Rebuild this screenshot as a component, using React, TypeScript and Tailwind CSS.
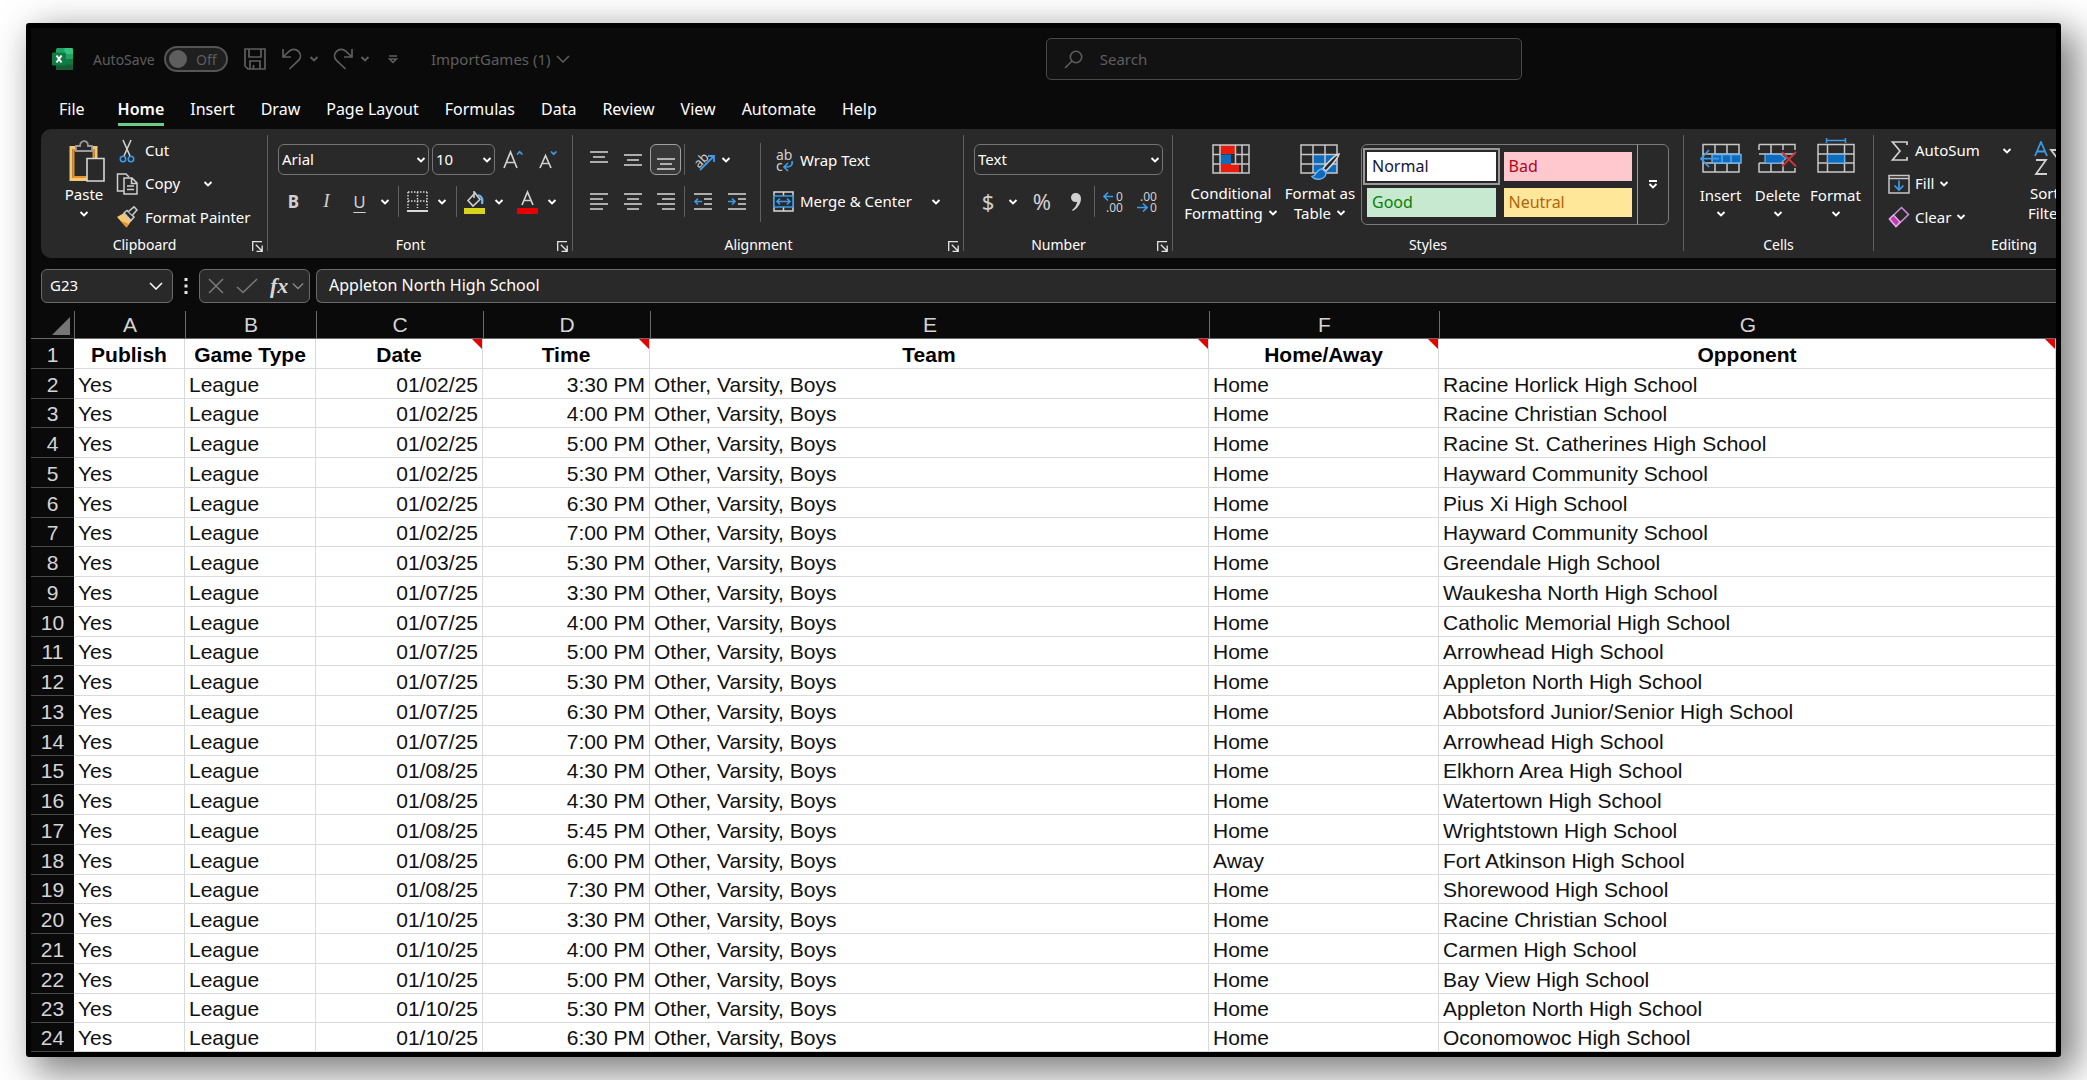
import React, { useState } from "react";

interface Game {
  date: string;
  time: string;
  place: string;
  opponent: string;
}

const games: Game[] = [
  { date: "01/02/25", time: "3:30 PM", place: "Home", opponent: "Racine Horlick High School" },
  { date: "01/02/25", time: "4:00 PM", place: "Home", opponent: "Racine Christian School" },
  { date: "01/02/25", time: "5:00 PM", place: "Home", opponent: "Racine St. Catherines High School" },
  { date: "01/02/25", time: "5:30 PM", place: "Home", opponent: "Hayward Community School" },
  { date: "01/02/25", time: "6:30 PM", place: "Home", opponent: "Pius Xi High School" },
  { date: "01/02/25", time: "7:00 PM", place: "Home", opponent: "Hayward Community School" },
  { date: "01/03/25", time: "5:30 PM", place: "Home", opponent: "Greendale High School" },
  { date: "01/07/25", time: "3:30 PM", place: "Home", opponent: "Waukesha North High School" },
  { date: "01/07/25", time: "4:00 PM", place: "Home", opponent: "Catholic Memorial High School" },
  { date: "01/07/25", time: "5:00 PM", place: "Home", opponent: "Arrowhead High School" },
  { date: "01/07/25", time: "5:30 PM", place: "Home", opponent: "Appleton North High School" },
  { date: "01/07/25", time: "6:30 PM", place: "Home", opponent: "Abbotsford Junior/Senior High School" },
  { date: "01/07/25", time: "7:00 PM", place: "Home", opponent: "Arrowhead High School" },
  { date: "01/08/25", time: "4:30 PM", place: "Home", opponent: "Elkhorn Area High School" },
  { date: "01/08/25", time: "4:30 PM", place: "Home", opponent: "Watertown High School" },
  { date: "01/08/25", time: "5:45 PM", place: "Home", opponent: "Wrightstown High School" },
  { date: "01/08/25", time: "6:00 PM", place: "Away", opponent: "Fort Atkinson High School" },
  { date: "01/08/25", time: "7:30 PM", place: "Home", opponent: "Shorewood High School" },
  { date: "01/10/25", time: "3:30 PM", place: "Home", opponent: "Racine Christian School" },
  { date: "01/10/25", time: "4:00 PM", place: "Home", opponent: "Carmen High School" },
  { date: "01/10/25", time: "5:00 PM", place: "Home", opponent: "Bay View High School" },
  { date: "01/10/25", time: "5:30 PM", place: "Home", opponent: "Appleton North High School" },
  { date: "01/10/25", time: "6:30 PM", place: "Home", opponent: "Oconomowoc High School" },
];

const tabs = ["File", "Home", "Insert", "Draw", "Page Layout", "Formulas", "Data", "Review", "View", "Automate", "Help"];

const columns = [
  { letter: "A", title: "Publish", width: "w-[111px]", note: false },
  { letter: "B", title: "Game Type", width: "w-[131px]", note: false },
  { letter: "C", title: "Date", width: "w-[167px]", note: true },
  { letter: "D", title: "Time", width: "w-[167px]", note: true },
  { letter: "E", title: "Team", width: "w-[559px]", note: true },
  { letter: "F", title: "Home/Away", width: "w-[230px]", note: true },
  { letter: "G", title: "Opponent", width: "", note: true },
];

function Chevron({ className = "" }: { className?: string }) {
  return (
    <svg width="10" height="6" viewBox="0 0 10 6" fill="none" className={`shrink-0 ${className}`}>
      <path d="M1.5 1l3.5 3.5L8.5 1" stroke="currentColor" strokeWidth="1.9" />
    </svg>
  );
}

function WideChevron({ className = "" }: { className?: string }) {
  return (
    <svg width="14" height="8" viewBox="0 0 14 8" fill="none" className={`shrink-0 ${className}`}>
      <path d="M1 1l6 6 6-6" stroke="currentColor" strokeWidth="1.5" />
    </svg>
  );
}

function Divider({ className = "" }: { className?: string }) {
  return <div className={`w-px shrink-0 bg-[#5f5f5f] ${className}`} />;
}

interface GroupProps {
  label: string;
  width: string;
  launcher?: boolean;
  children: React.ReactNode;
}

function Group({ label, width, launcher, children }: GroupProps) {
  return (
    <section className={`flex h-[129px] shrink-0 flex-col ${width}`}>
      <div className="flex h-[105px]">{children}</div>
      <div className="flex h-[22px] items-center">
        <h2 className="flex-1 text-center text-[14px] leading-5">{label}</h2>
        {launcher && (
          <button aria-label={`${label} settings`} className="mx-1 w-[11px] pt-[2px]">
            <svg width="11" height="11" viewBox="0 0 11 11" fill="none" stroke="#e6e6e6" strokeWidth="1.3">
              <path d="M.7 10V.7H10M3.8 3.8l6 6M10.2 4.6v5.7H4.5" />
            </svg>
          </button>
        )}
      </div>
    </section>
  );
}

function Combo({ label, options, width }: { label: string; options: string[]; width: string }) {
  return (
    <div className={`relative h-[31px] shrink-0 ${width}`}>
      <select
        aria-label={label}
        className="h-full w-full appearance-none rounded-md border border-[#757575] bg-[#292929] pl-[3px] text-[15px] text-white"
      >
        {options.map((o) => (
          <option key={o}>{o}</option>
        ))}
      </select>
      <Chevron className="pointer-events-none absolute right-[3px] top-[13px]" />
    </div>
  );
}

// Horizontal strokes, each [x1, x2, y]
function Lines({ rows, children }: { rows: number[][]; children?: React.ReactNode }) {
  return (
    <svg width="20" height="20" viewBox="0 0 20 20" fill="none" className="shrink-0">
      {rows.map(([a, b, y]) => (
        <path key={y} d={`M${a} ${y}H${b}`} stroke="#d8d8d8" strokeWidth="1.6" />
      ))}
      {children}
    </svg>
  );
}

function TitleBar() {
  const [autoSave, setAutoSave] = useState(false);
  return (
    <header className="flex h-[67px] items-center pb-[5px] pl-[21px] text-[#5e5e5e]">
      <svg width="21" height="22" viewBox="0 0 21 22" className="shrink-0">
        <rect x="4" width="17" height="22" rx="1.5" fill="#21a366" />
        <path d="M12.5 0H19.500a1.500 1.500 0 0 1 1.500 1.500V6H12.500z" fill="#33c481" />
        <path d="M4 11h17v9.500a1.500 1.500 0 0 1-1.500 1.500h-14A1.500 1.500 0 0 1 4 20.500z" fill="#185c37" />
        <path d="M12.500 11H21v5.500h-8.500z" fill="#107c41" />
        <rect y="4.500" width="14" height="13" rx="1.200" fill="#107c41" />
        <path d="M4.500 7.500l5 7M9.500 7.500l-5 7" stroke="#fff" strokeWidth="2" />
      </svg>
      <div className="ml-5 flex items-center gap-2 text-[14px]">
        <label htmlFor="autosave" className="w-[63px]">AutoSave</label>
        <button
          id="autosave"
          role="switch"
          aria-checked={autoSave}
          onClick={() => setAutoSave(!autoSave)}
          className="flex h-[26px] w-16 items-center rounded-full border-2 border-[#555] bg-[#1f1f1f] pl-[3px]"
        >
          <span className="h-[18px] w-[18px] rounded-full bg-[#5e5e5e]" />
          <span className="ml-[9px]">{autoSave ? "On" : "Off"}</span>
        </button>
      </div>
      <button aria-label="Save" className="ml-4">
        <svg width="22" height="22" viewBox="0 0 22 22" fill="none" stroke="currentColor" strokeWidth="1.7">
          <path d="M1 1h20v20H4l-3-3zM5 1v8h12V1M6 21v-8h10v8M9.500 21v-4" />
        </svg>
      </button>
      <button aria-label="Undo" className="ml-4 flex items-center gap-[7px]">
        <svg width="20" height="22" viewBox="0 0 20 22" fill="none" stroke="currentColor" strokeWidth="1.7">
          <path d="M1 1v8h8M1.500 8.500L7 3.300c3-2.800 7-2.500 9.500 0s2.700 6.200 0 9L7.500 21" />
        </svg>
        <Chevron />
      </button>
      <button aria-label="Redo" className="ml-[14px] flex items-center gap-[7px]">
        <svg width="20" height="22" viewBox="0 0 20 22" fill="none" stroke="currentColor" strokeWidth="1.7">
          <path d="M19 1v8h-8M18.500 8.500L13 3.300C10 .5 6 .8 3.500 3.300s-2.700 6.200 0 9L12.500 21" />
        </svg>
        <Chevron />
      </button>
      <button aria-label="Customize Quick Access Toolbar" className="ml-[18px]">
        <svg width="10" height="9" viewBox="0 0 10 9" fill="none" stroke="currentColor" strokeWidth="1.5">
          <path d="M1 1h8M1.500 4L5 7.500 8.500 4z" />
        </svg>
      </button>
      <button className="ml-[33px] flex shrink-0 items-center gap-[5px] whitespace-nowrap text-[15px]">
        ImportGames (1)
        <WideChevron />
      </button>
      <div className="flex min-w-0 flex-1 justify-center pr-[58px]">
        <label className="flex h-[42px] w-[476px] items-center rounded-[5px] border border-[#484848] bg-[#121212] pl-[17px]">
          <svg width="19" height="19" viewBox="0 0 19 19" fill="none" stroke="currentColor" strokeWidth="1.6" className="shrink-0">
            <circle cx="12" cy="7" r="5.700" />
            <path d="M8 11L1 18" />
          </svg>
          <input
            type="search"
            aria-label="Search"
            placeholder="Search"
            className="ml-[17px] min-w-0 flex-1 bg-transparent text-[15px] outline-none placeholder:text-[#5e5e5e]"
          />
        </label>
      </div>
    </header>
  );
}

function Tabs() {
  const [active, setActive] = useState("Home");
  return (
    <nav className="flex h-[34px] gap-[26px] pl-[28px] text-[16px]">
      {tabs.map((tab) => (
        <button
          key={tab}
          onClick={() => setActive(tab)}
          className={`flex h-[31px] shrink-0 items-center border-b-3 first:mr-[7px] ${
            tab === active ? "border-[#6ccb8b] font-semibold" : "border-transparent"
          }`}
        >
          {tab}
        </button>
      ))}
    </nav>
  );
}

function ClipboardGroup() {
  return (
    <Group label="Clipboard" width="w-[226px]" launcher>
      <button className="ml-[20px] flex h-[93px] w-[46px] flex-col items-center pt-[11px] text-[15px] leading-5">
        <svg width="36" height="42" viewBox="0 0 36 42" fill="none" className="ml-[5px] shrink-0">
          <path d="M2 7.500h25V39.500H2z" stroke="#f5c774" strokeWidth="3" />
          <path d="M4.500 10h20v27h-20z" stroke="#e8912d" strokeWidth="2" />
          <path d="M7 11V6h4c0-6.500 8-6.500 8 0h4v5z" fill="#292929" stroke="#9a9a9a" strokeWidth="1.8" />
          <path d="M18 18.500h17V41H18z" fill="#292929" stroke="#d8d8d8" strokeWidth="1.6" />
        </svg>
        <span className="mt-[2px]">Paste</span>
        <Chevron className="mt-[7px]" />
      </button>
      <div className="ml-[9px] flex flex-col pt-[5px] text-[15px]">
        <button className="flex h-[33px] items-center gap-[7px]">
          <svg width="22" height="24" viewBox="0 0 22 24" fill="none" className="shrink-0" strokeWidth="1.6">
            <path d="M7 1l7 16M15 1L8 17" stroke="#d0d0d0" />
            <circle cx="7" cy="20" r="2.700" stroke="#3b9be8" />
            <circle cx="15" cy="20" r="2.700" stroke="#3b9be8" />
          </svg>
          Cut
        </button>
        <button className="flex h-[33px] items-center gap-[7px]">
          <svg width="22" height="22" viewBox="0 0 22 22" fill="none" className="shrink-0" stroke="#d0d0d0" strokeWidth="1.5">
            <path d="M8 18H1.500V1H10l3 3" />
            <path d="M8 5h8l5 5v11H8zM15.500 5v5.500H21M11 13h7M11 16.500h7" />
          </svg>
          Copy
          <Chevron className="ml-[16px]" />
        </button>
        <button className="flex h-[34px] items-center gap-[7px] whitespace-nowrap">
          <svg width="22" height="22" viewBox="0 0 22 22" fill="none" className="shrink-0">
            <path d="M1 11l7-4 8 7-5.500 7.500z" fill="#f5c774" />
            <path d="M4 14.500l9 3.500-2.500 3.500z" fill="#e8912d" />
            <path d="M8 7l3-2.500L18 11l-3 3.500z" fill="#292929" stroke="#c8c8c8" strokeWidth="1.6" />
            <path d="M12.500 5.500L18 .8 21 4l-4.500 5" fill="#292929" stroke="#c8c8c8" strokeWidth="1.6" />
          </svg>
          Format Painter
        </button>
      </div>
    </Group>
  );
}

function FontGroup() {
  return (
    <Group label="Font" width="w-[304px]" launcher>
      <div className="flex flex-col gap-[11px] pl-[10px] pt-[15px]">
        <div className="flex h-[31px] items-center">
          <Combo label="Font name" options={["Arial", "Calibri", "Verdana"]} width="w-[151px]" />
          <div className="w-[3px]" />
          <Combo label="Font size" options={["10", "11", "12"]} width="w-[63px]" />
          <button aria-label="Increase font size" className="ml-[8px]">
            <svg width="21" height="21" viewBox="0 0 21 21" fill="none" strokeWidth="1.7">
              <path d="M1 19L7.500 3 14 19M3.500 13.500h8" stroke="#d0d0d0" />
              <path d="M14 5.500l2.700-2.700 2.700 2.700" stroke="#3b9be8" />
            </svg>
          </button>
          <button aria-label="Decrease font size" className="ml-[15px]">
            <svg width="19" height="21" viewBox="0 0 19 21" fill="none" strokeWidth="1.7">
              <path d="M1 19L6.500 6.500 12 19M3.500 14.500h6.500" stroke="#d0d0d0" />
              <path d="M12 2.500l2.700 2.700 2.700-2.700" stroke="#3b9be8" />
            </svg>
          </button>
        </div>
        <div className="flex h-[31px] items-center text-[#d0d0d0]">
          <button aria-label="Bold" className="w-[31px] text-[17px] font-bold">B</button>
          <button aria-label="Italic" className="w-[35px] font-['Liberation_Serif',serif] text-[19px] italic">I</button>
          <button aria-label="Underline" className="w-[31px] text-[17px] underline underline-offset-4">U</button>
          <button aria-label="Underline styles" className="flex w-[20px] justify-center text-white">
            <Chevron />
          </button>
          <Divider className="ml-[3px] h-[31px]" />
          <button aria-label="Borders" className="ml-[8px] flex items-center gap-[9px]">
            <svg width="21" height="21" viewBox="0 0 21 21" fill="none" stroke="#d8d8d8" strokeWidth="1.5">
              <path d="M1 1h19M1 10h19M1 1v16M10.500 1v16M20 1v16" strokeDasharray="1.5 1.5" />
              <path d="M0 20h21" strokeWidth="1.8" />
            </svg>
            <Chevron className="text-white" />
          </button>
          <Divider className="ml-[9px] h-[31px]" />
          <button aria-label="Fill color" className="ml-[7px] flex items-center gap-[9px]">
            <svg width="21" height="24" viewBox="0 0 21 24" fill="none">
              <path d="M4 10.500L11 3l5 6.500L9 16zM10 1v7" stroke="#d0d0d0" strokeWidth="1.6" />
              <path d="M14 5c3.500 1 5 4 4 9" stroke="#6db3ee" strokeWidth="2.3" />
              <path d="M0 18h21v6H0z" fill="#d8d41c" />
            </svg>
            <Chevron className="text-white" />
          </button>
          <button aria-label="Font color" className="ml-[13px] flex items-center gap-[9px]">
            <svg width="21" height="24" viewBox="0 0 21 24" fill="none">
              <path d="M5 15l5.500-13L16 15M7 10.500h7" stroke="#d0d0d0" strokeWidth="1.7" />
              <path d="M0 18h21v6H0z" fill="#e60000" />
            </svg>
            <Chevron className="text-white" />
          </button>
        </div>
      </div>
    </Group>
  );
}

function AlignmentGroup() {
  return (
    <Group label="Alignment" width="w-[390px]" launcher>
      <div className="flex flex-col gap-[11px] pl-[9px] pt-[15px]">
        <div className="flex h-[31px] items-center">
          <button aria-label="Top align" className="flex w-[34px] justify-center">
            <Lines rows={[[1, 19, 4], [4, 16, 9], [1, 19, 14]].map(([a, b, y]) => [a, b, y - 2])} />
          </button>
          <button aria-label="Middle align" className="flex w-[34px] justify-center">
            <Lines rows={[[1, 19, 5], [4, 16, 10], [1, 19, 15]]} />
          </button>
          <button aria-label="Bottom align" className="flex h-[31px] w-[31px] items-center justify-center rounded-md border border-[#a0a0a0] bg-[#383838]">
            <Lines rows={[[1, 19, 9], [4, 16, 14], [1, 19, 19]]} />
          </button>
          <Divider className="ml-[3px] h-[31px]" />
          <button aria-label="Orientation" className="ml-[8px] flex items-center gap-[6px]">
            <svg width="22" height="22" viewBox="0 0 22 22" fill="none" className="overflow-visible">
              <text x="1" y="16" transform="rotate(-45 8 12)" fill="#d0d0d0" fontSize="13">ab</text>
              <path d="M7 21L20.500 7.500M15 7h6v6" stroke="#3b9be8" strokeWidth="1.8" />
            </svg>
            <Chevron />
          </button>
        </div>
        <div className="flex h-[31px] items-center">
          <button aria-label="Align left" className="flex w-[34px] justify-center">
            <Lines rows={[[1, 19, 2], [1, 14, 7], [1, 19, 12], [1, 14, 17]]} />
          </button>
          <button aria-label="Center" className="flex w-[34px] justify-center">
            <Lines rows={[[1, 19, 2], [4, 16, 7], [1, 19, 12], [4, 16, 17]]} />
          </button>
          <button aria-label="Align right" className="flex w-[31px] justify-center">
            <Lines rows={[[1, 19, 2], [6, 19, 7], [1, 19, 12], [6, 19, 17]]} />
          </button>
          <Divider className="ml-[3px] h-[31px]" />
          <button aria-label="Decrease indent" className="ml-[8px]">
            <Lines rows={[[1, 19, 2], [11, 19, 7], [11, 19, 12], [1, 19, 17]]}>
              <path d="M9 9.500H2M5 6.500l-3 3 3 3" stroke="#3b9be8" strokeWidth="1.6" />
            </Lines>
          </button>
          <button aria-label="Increase indent" className="ml-[14px]">
            <Lines rows={[[1, 19, 2], [11, 19, 7], [11, 19, 12], [1, 19, 17]]}>
              <path d="M1 9.500h7M5 6.500l3 3-3 3" stroke="#3b9be8" strokeWidth="1.6" />
            </Lines>
          </button>
        </div>
      </div>
      <Divider className="ml-[13px] mt-[14px] h-[79px]" />
      <div className="flex flex-col gap-[10px] pl-[12px] pt-4 text-[15px]">
        <button className="flex h-[31px] items-center gap-[6px] whitespace-nowrap">
          <svg width="21" height="22" viewBox="0 0 21 22" fill="none" className="overflow-visible">
            <text x="3" y="10" fill="#d0d0d0" fontSize="14">ab</text>
            <text x="3" y="21" fill="#d0d0d0" fontSize="14">c</text>
            <path d="M19 11c1 5-2 6-7 6M15 13l-4 4 4 4" stroke="#3b9be8" strokeWidth="1.7" />
          </svg>
          Wrap Text
        </button>
        <button className="flex h-[31px] items-center gap-[6px] whitespace-nowrap">
          <svg width="21" height="21" viewBox="0 0 21 21" fill="none">
            <path d="M1 1h19v19H1zM10.500 1v4M10.500 16v4" stroke="#d8d8d8" strokeWidth="1.5" />
            <path d="M1 5h19v11H1z" fill="#292929" stroke="#3b9be8" strokeWidth="1.6" />
            <path d="M4 10.500h13M7 7.500l-3 3 3 3M14 7.500l3 3-3 3" stroke="#3b9be8" strokeWidth="1.6" />
          </svg>
          <span className="w-[125px] text-left">Merge &amp; Center</span>
          <Chevron />
        </button>
      </div>
    </Group>
  );
}

function NumberGroup() {
  return (
    <Group label="Number" width="w-[208px]" launcher>
      <div className="flex flex-col gap-[11px] pl-[10px] pt-[15px]">
        <Combo label="Number format" options={["Text", "General", "Number"]} width="w-[189px]" />
        <div className="flex h-[31px] items-center text-[22px] text-[#d0d0d0]">
          <button aria-label="Accounting format" className="w-[28px]">$</button>
          <button aria-label="Accounting formats" className="flex w-[22px] justify-center text-white">
            <Chevron />
          </button>
          <button aria-label="Percent style" className="w-[36px]">%</button>
          <button aria-label="Comma style" className="flex w-[32px] justify-center">
            <svg width="10" height="18" viewBox="0 0 10 18" fill="#d0d0d0">
              <path d="M4.500 0a4.500 4.500 0 0 0 0 9c.7 0 1.200-.1 1.700-.3C5.700 12 4 14.500 1 17l1 1c5-3 8-8 8-12.500C10 2 7.500 0 4.500 0z" />
            </svg>
          </button>
          <Divider className="ml-[2px] h-[31px]" />
          <button aria-label="Increase decimal" className="ml-[8px]">
            <svg width="22" height="24" viewBox="0 0 22 24" fill="#d0d0d0" className="overflow-visible">
              <text x="13" y="11" fontSize="12">0</text>
              <text x="3" y="22" fontSize="12">.00</text>
              <path d="M10 6.500H1M5 2.500l-4 4 4 4" fill="none" stroke="#3b9be8" strokeWidth="1.7" />
            </svg>
          </button>
          <button aria-label="Decrease decimal" className="ml-[12px]">
            <svg width="22" height="24" viewBox="0 0 22 24" fill="#d0d0d0" className="overflow-visible">
              <text x="3" y="11" fontSize="12">.00</text>
              <text x="13" y="22" fontSize="12">0</text>
              <path d="M0 17.500h9.500M6 13.500l4 4-4 4" fill="none" stroke="#3b9be8" strokeWidth="1.7" />
            </svg>
          </button>
        </div>
      </div>
    </Group>
  );
}

function StylesGroup() {
  return (
    <Group label="Styles" width="w-[510px]">
      <button className="ml-[8px] flex w-[100px] flex-col items-center pt-[14px] text-[15px] leading-5">
        <svg width="38" height="34" viewBox="0 0 38 34" fill="none" className="shrink-0">
          <path d="M8 2h16v9H8zM8 21h19v9H8z" fill="#e81c0c" />
          <path d="M8 11.500h11V21H8z" fill="#0f6cbd" />
          <path d="M1 2h36v28H1zM1 11.500h7M24 11.500h13M1 21h7M19 21h18M8 2v28M30 2v28M23.500 2v19" stroke="#c8c8c8" strokeWidth="1.5" />
        </svg>
        <span className="mt-[6px]">Conditional</span>
        <span className="flex items-center gap-[5px]">
          Formatting
          <Chevron />
        </span>
      </button>
      <button className="ml-[2px] flex w-[74px] flex-col items-center whitespace-nowrap pt-[14px] text-[15px] leading-5">
        <svg width="40" height="37" viewBox="0 0 40 37" fill="none" className="shrink-0">
          <path d="M13 11.500h24V30H13z" fill="#0f6cbd" />
          <path d="M1 2h36v28H1zM1 11.500h36M1 21h36M13 2v28M25 2v28" stroke="#c8c8c8" strokeWidth="1.5" />
          <path d="M39 11c-3 .5-9 6-16 14.500l3 2.500c7-7 12-13 13-17z" fill="#292929" stroke="#d8d8d8" strokeWidth="1.6" />
          <path d="M22 26c-6 0-4 6-10 7.500 3 4 14 4 14-4z" fill="#0f6cbd" stroke="#6db3ee" strokeWidth="1.4" />
        </svg>
        <span className="mt-[3px]">Format as</span>
        <span className="flex items-center gap-[5px]">
          Table
          <Chevron />
        </span>
      </button>
      <div className="ml-[4px] mt-[15px] flex h-[81px] w-[308px] rounded-md border border-[#7a7a7a]">
        <div className="grid flex-1 grid-cols-2 gap-x-[8px] gap-y-[7px] px-[5px] py-[7px] text-[16px]">
          <button className="bg-white pb-[2px] pl-[5px] text-left text-[#15153a] outline-2 outline-offset-2 outline-[#9a9a9a]">Normal</button>
          <button className="bg-[#ffc7ce] pb-[2px] pl-[5px] text-left text-[#b0061a]">Bad</button>
          <button className="bg-[#c6e9cf] pb-[2px] pl-[5px] text-left text-[#078007]">Good</button>
          <button className="bg-[#ffe799] pb-[2px] pl-[5px] text-left text-[#b0660c]">Neutral</button>
        </div>
        <button aria-label="More styles" className="flex w-[31px] items-center justify-center rounded-r-md border-l border-[#9a9a9a]">
          <svg width="10" height="9" viewBox="0 0 10 9" fill="none" stroke="#fff" strokeWidth="1.8">
            <path d="M1 1h8M1.500 4L5 7.500 8.500 4" />
          </svg>
        </button>
      </div>
    </Group>
  );
}

function CellsGroup() {
  return (
    <Group label="Cells" width="w-[189px]">
      <div className="flex pl-[8px] pt-[8px] text-[15px] leading-5">
        <button className="flex w-[57px] flex-col items-center">
          <svg width="42" height="36" viewBox="0 0 42 36" fill="none" className="shrink-0">
            <path d="M3 7.500h36V35H3zM3 17h36M3 26h36M15 8v27M27 8v27" stroke="#c8c8c8" strokeWidth="1.5" />
            <path d="M12 17.500h29v8.500H12z" fill="#0f6cbd" stroke="#6db3ee" strokeWidth="1.4" />
            <path d="M22 17v9M31 17v9" stroke="#6db3ee" strokeWidth="1.2" />
            <path d="M19 21.700H1M9 13l-8 8.700L9 30" stroke="#3b9be8" strokeWidth="1.8" />
          </svg>
          <span className="mt-[12px]">Insert</span>
          <Chevron className="mt-[6px]" />
        </button>
        <button className="flex w-[57px] flex-col items-center">
          <svg width="40" height="36" viewBox="0 0 40 36" fill="none" className="shrink-0">
            <path d="M1 7.500h36V13M37 31v4H1v-9M1 13V7.500M1 17h36M1 26h25M13 8v9M25 8v5M13 26v9M25 26v9" stroke="#c8c8c8" strokeWidth="1.5" />
            <path d="M7 17.500h16l5 4-5 4.500H7z" fill="#0f6cbd" stroke="#6db3ee" strokeWidth="1.2" />
            <path d="M24 15l14 14.500M38 15L24 29.500" stroke="#d13438" strokeWidth="1.8" />
          </svg>
          <span className="mt-[12px]">Delete</span>
          <Chevron className="mt-[6px]" />
        </button>
        <button className="flex w-[59px] flex-col items-center">
          <svg width="38" height="36" viewBox="0 0 38 36" fill="none" className="shrink-0">
            <path d="M9.500 3.500h19M9.500 1v5M28.500 1v5" stroke="#3b9be8" strokeWidth="1.5" />
            <path d="M1 7.500h36V35H1zM1 17h36M1 26h36M10.500 8v27M27.500 8v27" stroke="#c8c8c8" strokeWidth="1.5" />
            <path d="M10.500 17.500h17V26h-17z" fill="#0f6cbd" stroke="#6db3ee" strokeWidth="1.2" />
          </svg>
          <span className="mt-[12px]">Format</span>
          <Chevron className="mt-[6px]" />
        </button>
      </div>
    </Group>
  );
}

function EditingGroup() {
  return (
    <Group label="Editing" width="w-[280px]">
      <div className="flex w-[138px] shrink-0 flex-col pl-[14px] pt-[5px] text-[15px]">
        <button className="flex h-[33px] items-center gap-[5px]">
          <svg width="22" height="22" viewBox="0 0 22 22" fill="none" stroke="#d0d0d0" strokeWidth="1.7" className="shrink-0">
            <path d="M19 5V2H4.500l7.500 9-7.500 9H19v-3" />
          </svg>
          <span className="w-[81px] text-left">AutoSum</span>
          <Chevron className="ml-[4px]" />
        </button>
        <button className="flex h-[33px] items-center gap-[5px]">
          <svg width="22" height="20" viewBox="0 0 22 20" fill="none" className="shrink-0">
            <path d="M1 1.500h20V19H1zM1 4.500h20" stroke="#c8c8c8" strokeWidth="1.5" />
            <path d="M11 6.500V16M6.500 11.500L11 16l4.500-4.500" stroke="#3b9be8" strokeWidth="1.7" />
          </svg>
          Fill
          <Chevron />
        </button>
        <button className="flex h-[34px] items-center gap-[5px]">
          <svg width="22" height="22" viewBox="0 0 22 22" fill="none" className="shrink-0">
            <path d="M1.500 13L13.500 1.500l7 7L8 20.500z" stroke="#c98bd6" strokeWidth="1.6" />
            <path d="M1.500 13l4-4 6.500 7-4 4.500z" fill="#c239b3" stroke="#e3b0ea" strokeWidth="1.3" />
          </svg>
          Clear
          <Chevron />
        </button>
      </div>
      <button className="ml-[14px] flex w-[60px] shrink-0 flex-col items-start whitespace-nowrap pt-[12px] text-[15px] leading-5">
        <svg width="38" height="36" viewBox="0 0 38 36" fill="none" className="ml-[8px] shrink-0" strokeWidth="1.8">
          <path d="M1 15L7 1l6 14M3 10.500h8" stroke="#3b9be8" />
          <path d="M2 19h10L2 33h11" stroke="#d0d0d0" />
          <path d="M17 9h20l-8 9v12l-5-3v-9z" stroke="#d0d0d0" />
        </svg>
        <span className="ml-[4px] mt-[6px]">Sort &amp;</span>
        <span className="ml-[2px] flex items-center gap-[5px]">
          Filter
          <Chevron />
        </span>
      </button>
    </Group>
  );
}

function Ribbon() {
  const sep = "mb-[7px] mt-[6px]";
  return (
    <div className="ml-[10px] flex h-[129px] overflow-hidden rounded-l-[10px] bg-[#292929]">
      <ClipboardGroup />
      <Divider className={sep} />
      <FontGroup />
      <Divider className={sep} />
      <AlignmentGroup />
      <Divider className={sep} />
      <NumberGroup />
      <Divider className={sep} />
      <StylesGroup />
      <Divider className={sep} />
      <CellsGroup />
      <Divider className={sep} />
      <EditingGroup />
    </div>
  );
}

function FormulaBar() {
  return (
    <div className="flex h-[53px] items-start pl-[10px] pt-[11px]">
      <div className="relative h-[34px] w-[132px] shrink-0">
        <input
          aria-label="Name box"
          defaultValue="G23"
          className="h-full w-full rounded-md border border-[#6a6a6a] bg-[#292929] pb-[2px] pl-[8px] text-[15px] outline-none"
        />
        <WideChevron className="absolute right-[10px] top-[13px]" />
      </div>
      <svg width="4" height="16" viewBox="0 0 4 16" fill="#e6e6e6" className="ml-[11px] mt-[9px] shrink-0">
        <path d="M.5 0h3v3h-3zM.5 6.500h3v3h-3zM.5 13h3v3h-3z" />
      </svg>
      <div className="ml-[11px] flex h-[34px] w-[111px] shrink-0 items-center rounded-md border border-[#6a6a6a] bg-[#292929] pl-[8px] text-[#7a7a7a]">
        <button aria-label="Cancel">
          <svg width="16" height="16" viewBox="0 0 16 16" stroke="currentColor" strokeWidth="1.5">
            <path d="M1 1l14 14M15 1L1 15" />
          </svg>
        </button>
        <button aria-label="Enter" className="ml-[12px]">
          <svg width="22" height="16" viewBox="0 0 22 16" fill="none" stroke="currentColor" strokeWidth="1.5">
            <path d="M1 9l6 5.500L21 1" />
          </svg>
        </button>
        <button aria-label="Insert function" className="ml-[12px] flex items-center gap-[4px] text-[#d8d8d8]">
          <span className="font-['Liberation_Serif',serif] text-[22px] leading-6 font-bold italic">fx</span>
          <WideChevron className="w-[12px] text-[#8a8a8a]" />
        </button>
      </div>
      <input
        aria-label="Formula"
        defaultValue="Appleton North High School"
        className="ml-[6px] h-[34px] min-w-0 flex-1 rounded-l-md border border-r-0 border-[#6a6a6a] bg-[#292929] pb-[2px] pl-[12px] text-[16px] outline-none"
      />
    </div>
  );
}

function Sheet() {
  const cell = "border-b border-r border-[#d9dadc] px-1 pt-[2px] pb-0";
  const rowHead = "border-b border-[#4a4a4a] bg-[#0a0a0a] px-0 pt-[2px] pb-0 font-normal text-[#d4d4d4]";
  return (
    <table className="w-full table-fixed border-separate border-spacing-0 bg-white font-['Liberation_Sans',Arial,sans-serif] text-[21px] leading-[26px] whitespace-nowrap text-[#111]">
      <thead>
        <tr className="h-[28px] bg-[#0a0a0a] text-[#d4d4d4]">
          <th aria-label="Select all" className="w-[43px] border-b border-[#6a6a6a] p-0">
            <svg width="18" height="18" viewBox="0 0 18 18" className="mt-[3px] ml-[21px]">
              <path d="M18 0v18H0z" fill="#757575" />
            </svg>
          </th>
          {columns.map((c) => (
            <th key={c.letter} className={`border-b border-l border-[#6a6a6a] p-0 font-normal ${c.width}`}>
              {c.letter}
            </th>
          ))}
        </tr>
      </thead>
      <tbody>
        <tr className="h-[30px] text-black">
          <th className={rowHead}>1</th>
          {columns.map((c) => (
            <th key={c.letter} className={`relative ${cell}`}>
              {c.title}
              {c.note && (
                <svg width="10" height="10" viewBox="0 0 10 10" className="absolute top-0 right-0">
                  <path d="M0 0h10v10z" fill="#e60000" />
                </svg>
              )}
            </th>
          ))}
        </tr>
        {games.map((g, i) => (
          <tr key={i} className={i % 4 === 1 || i === games.length - 1 ? "h-[29px]" : "h-[30px]"}>
            <th className={rowHead}>{i + 2}</th>
            <td className={cell}>Yes</td>
            <td className={cell}>League</td>
            <td className={`text-right ${cell}`}>{g.date}</td>
            <td className={`text-right ${cell}`}>{g.time}</td>
            <td className={cell}>Other, Varsity, Boys</td>
            <td className={cell}>{g.place}</td>
            <td className={cell}>{g.opponent}</td>
          </tr>
        ))}
      </tbody>
    </table>
  );
}

export default function App() {
  return (
    <main className="min-h-screen overflow-hidden bg-white px-[26px] py-[23px] font-['Noto_Sans',sans-serif] text-white">
      <div className="overflow-hidden rounded-[3px] border-5 border-black bg-[#0a0a0a] shadow-[12px_12px_36px_4px_rgba(0,0,0,0.5)]">
        <TitleBar />
        <Tabs />
        <Ribbon />
        <FormulaBar />
        <Sheet />
      </div>
    </main>
  );
}
